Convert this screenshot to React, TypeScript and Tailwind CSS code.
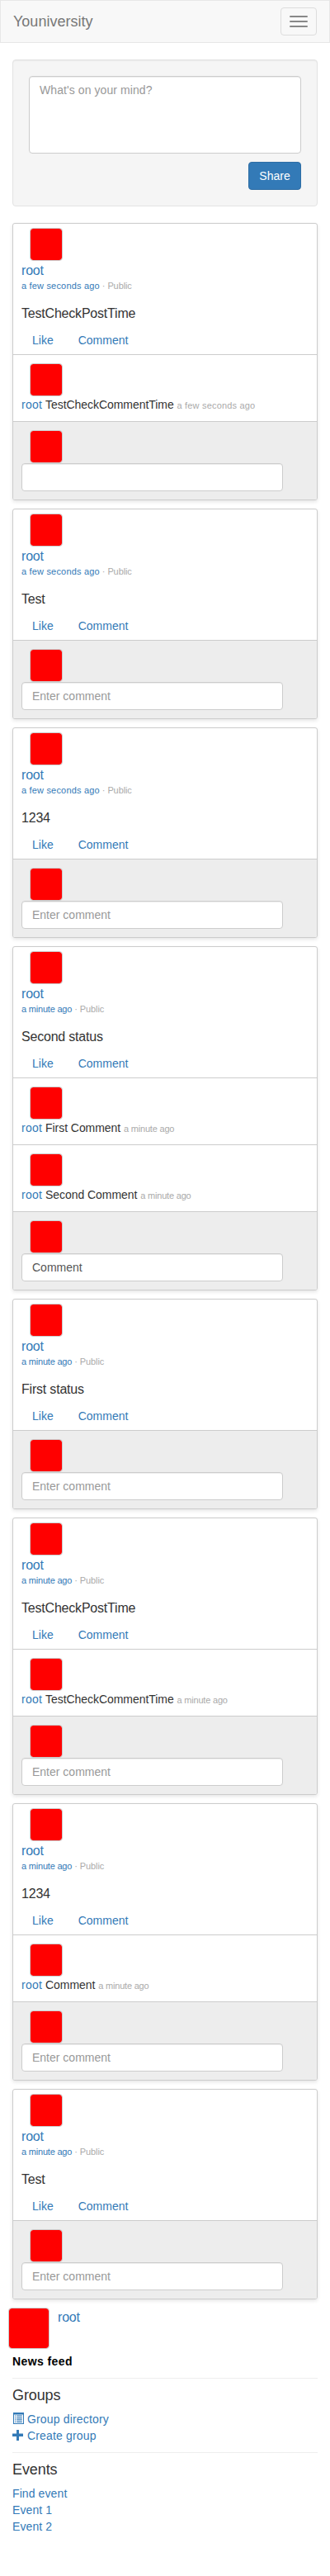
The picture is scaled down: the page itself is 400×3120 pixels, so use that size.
import React from "react";

type Comment = { text: string; time: string };
type Post = {
  time: string;
  text: string;
  comments: Comment[];
  draft?: string;
  placeholder?: string;
};

const SECONDS = "a few seconds ago";
const MINUTE = "a minute ago";

const posts: Post[] = [
  { time: SECONDS, text: "TestCheckPostTime", comments: [{ text: "TestCheckCommentTime", time: SECONDS }], placeholder: "" },
  { time: SECONDS, text: "Test", comments: [] },
  { time: SECONDS, text: "1234", comments: [] },
  {
    time: MINUTE,
    text: "Second status",
    comments: [
      { text: "First Comment", time: MINUTE },
      { text: "Second Comment", time: MINUTE },
    ],
    draft: "Comment",
  },
  { time: MINUTE, text: "First status", comments: [] },
  { time: MINUTE, text: "TestCheckPostTime", comments: [{ text: "TestCheckCommentTime", time: MINUTE }] },
  { time: MINUTE, text: "1234", comments: [{ text: "Comment", time: MINUTE }] },
  { time: MINUTE, text: "Test", comments: [] },
];

function Avatar() {
  return <div className="ml-[10px] size-10 rounded border border-[#cccccc] bg-[#ff0000] bg-clip-padding" />;
}

function TimeText({ time }: { time: string }) {
  return <span className={time === SECONDS ? "tracking-[0.18px]" : "tracking-[-0.2px]"}>{time}</span>;
}

function NavBar() {
  return (
    <nav className="flex h-[52px] items-center justify-between border border-[#e7e7e7] bg-[#f8f8f8] px-[15px]">
      <a className="text-[18px] leading-5 text-[#777777]">Youniversity</a>
      <button className="flex h-[34px] w-11 flex-col justify-center gap-1 rounded border border-[#dddddd] px-[10px]">
        <span className="h-0.5 w-[22px] rounded-[1px] bg-[#888888]" />
        <span className="h-0.5 w-[22px] rounded-[1px] bg-[#888888]" />
        <span className="h-0.5 w-[22px] rounded-[1px] bg-[#888888]" />
      </button>
    </nav>
  );
}

function ShareBox() {
  return (
    <section className="mt-5 flex h-[178px] flex-col items-end gap-[10px] rounded border border-[#e3e3e3] bg-[#f5f5f5] p-[19px] shadow-[inset_0_1px_1px_rgba(0,0,0,0.05)]">
      <textarea
        className="block h-[94px] w-full resize-none rounded border border-[#cccccc] bg-white px-3 py-1.5 text-[14px] leading-5 tracking-[0.08px] shadow-[inset_0_1px_1px_rgba(0,0,0,0.075)] placeholder:text-[#999999]"
        placeholder="What's on your mind?"
      />
      <button className="h-[34px] w-16 rounded border border-[#2e6da4] bg-[#337ab7] text-[14px] leading-5 text-white">Share</button>
    </section>
  );
}

function PostCard({ post }: { post: Post }) {
  return (
    <article className="mb-[10px] overflow-hidden rounded-[3px] border border-[#cccccc] bg-white shadow-[0_2px_4px_rgba(0,0,0,0.1)]">
      <div className="h-[158px] px-[10px] pt-[5px]">
        <Avatar />
        <div className="mt-px text-[16px] leading-[22px] tracking-[-0.2px] text-[#337ab7]">root</div>
        <div className="-mt-px text-[11px] leading-4 text-[#aaaaaa]">
          <a className="text-[#337ab7]">
            <TimeText time={post.time} />
          </a>{" "}
          <span className="tracking-[-0.1px]">· Public</span>
        </div>
        <p className="mt-[15px] text-[16px] leading-[22px] tracking-[-0.2px] text-[#333333]">{post.text}</p>
        <div className="mt-[11px] flex gap-[30px] pl-[13px] text-[14px] leading-5 text-[#337ab7]">
          <a>Like</a>
          <a>Comment</a>
        </div>
      </div>
      {post.comments.map((c) => (
        <div key={c.text} className="h-[81px] border-t border-[#cccccc] px-[10px] pt-[10px]">
          <Avatar />
          <p className="text-[14px] leading-5 text-[#333333]">
            <a className="tracking-[0.25px] text-[#337ab7]">root</a>{" "}
            <span className="tracking-[-0.05px]">{c.text}</span>{" "}
            <span className="text-[11px] text-[#aaaaaa]">
              <TimeText time={c.time} />
            </span>
          </p>
        </div>
      ))}
      <div className="h-[95px] border-t border-[#cccccc] bg-[#ededed] px-[10px] pt-[10px]">
        <Avatar />
        <input
          className="block h-[34px] w-[317px] rounded border border-[#cccccc] bg-white px-3 text-[14px] leading-5 text-[#555555] shadow-[inset_0_1px_1px_rgba(0,0,0,0.075)] placeholder:text-[#999999]"
          defaultValue={post.draft}
          placeholder={post.placeholder ?? "Enter comment"}
        />
      </div>
    </article>
  );
}

function ListIcon() {
  return (
    <svg className="mt-[2px] h-[14px] w-[14px]" viewBox="0 0 14 14" fill="#337ab7">
      <path fillRule="evenodd" d="M1 0h13v14H1zM2 2.4v10.6h11V2.4z" />
      <path d="M3 3.5h1.2v1.3H3zM5.2 3.5h6.6v1.3H5.2zM3 5.9h1.2v1.3H3zM5.2 5.9h6.6v1.3H5.2zM3 8.3h1.2v1.3H3zM5.2 8.3h6.6v1.3H5.2zM3 10.7h1.2v1.2H3zM5.2 10.7h6.6v1.2H5.2z" />
    </svg>
  );
}

function PlusIcon() {
  return (
    <svg className="mt-[2px] h-[14px] w-[14px]" viewBox="0 0 14 14" fill="#337ab7">
      <path d="M5 1.3q0-.3.3-.3h2.4q.3 0 .3.3V5.5h4.7q.3 0 .3.3v2.9q0 .3-.3.3H8v4.7q0 .3-.3.3H5.3q-.3 0-.3-.3V9H.3Q0 9 0 8.7V5.8q0-.3.3-.3H5z" />
    </svg>
  );
}

function Sidebar() {
  return (
    <aside className="text-[14px] leading-5 text-[#337ab7]">
      <div className="-ml-[5px] flex gap-[10px]">
        <div className="size-[50px] rounded border border-[#cccccc] bg-[#ff0000] bg-clip-padding" />
        <a className="text-[16px] leading-[23px] tracking-[-0.2px]">root</a>
      </div>
      <div className="mt-[5px] font-bold tracking-[0.4px] text-black">News feed</div>
      <hr className="mt-[10px] border-[#eeeeee]" />
      <h4 className="mt-[10px] text-[18px] leading-5 tracking-[-0.1px] text-[#333333]">Groups</h4>
      <div className="mt-[9px] flex gap-1 tracking-[0.16px]">
        <ListIcon />
        <a>Group directory</a>
      </div>
      <div className="flex gap-1 tracking-[0.16px]">
        <PlusIcon />
        <a>Create group</a>
      </div>
      <hr className="mt-[10px] border-[#eeeeee]" />
      <h4 className="mt-[10px] text-[18px] leading-5 tracking-[-0.1px] text-[#333333]">Events</h4>
      <div className="mt-[9px] flex flex-col tracking-[0.1px]">
        <a>Find event</a>
        <a>Event 1</a>
        <a>Event 2</a>
      </div>
    </aside>
  );
}

export default function App() {
  return (
    <div className="min-h-[3120px] w-full bg-white font-['Liberation_Sans',Arial,sans-serif]">
      <NavBar />
      <main className="px-[15px]">
        <ShareBox />
        <div className="mt-5">
          {posts.map((p, i) => (
            <PostCard key={i} post={p} />
          ))}
        </div>
        <Sidebar />
      </main>
    </div>
  );
}
